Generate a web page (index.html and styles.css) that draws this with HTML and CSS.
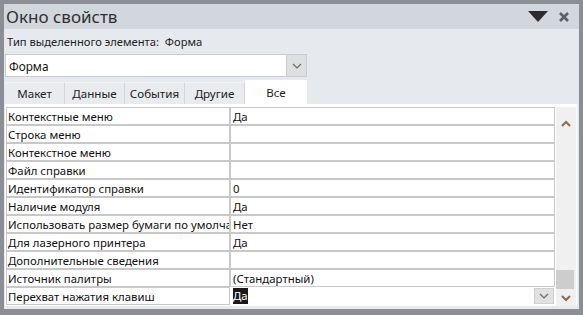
FILE: index.html
```html
<!DOCTYPE html>
<html lang="ru">
<head>
    <meta charset="UTF-8">
    <title>Окно свойств</title>
    <link rel="stylesheet" href="styles.css">
</head>
<body>
    <div class="prop-window">
        <div class="title-bar">
            <span class="title">Окно свойств</span>
            <div class="title-buttons">
                <svg class="menu-arrow" width="20" height="12" viewBox="0 0 20 12">
                    <polygon points="0,0 20,0 10,11" fill="#2f2b2c"/>
                </svg>
                <svg class="close-btn" width="12" height="12" viewBox="0 0 12 12">
                    <path d="M2 2 L10 10 M10 2 L2 10" stroke="#5b6068" stroke-width="2.6"/>
                </svg>
            </div>
        </div>

        <div class="sel-type">Тип выделенного элемента:&nbsp; Форма</div>

        <div class="combo">
            <span class="combo-text">Форма</span>
            <span class="combo-btn">
                <svg width="10" height="6" viewBox="0 0 10 6"><path d="M1 1 L5 5 L9 1" fill="none" stroke="#6a6a6a" stroke-width="1.2"/></svg>
            </span>
        </div>

        <div class="tabs">
            <div class="tab">Макет</div>
            <div class="tab">Данные</div>
            <div class="tab">События</div>
            <div class="tab">Другие</div>
            <div class="tab active">Все</div>
        </div>

        <div class="grid-panel">
            <div class="grid">
                <div class="row"><div class="cell name">Контекстные меню</div><div class="cell value">Да</div></div>
                <div class="row"><div class="cell name">Строка меню</div><div class="cell value"></div></div>
                <div class="row"><div class="cell name">Контекстное меню</div><div class="cell value"></div></div>
                <div class="row"><div class="cell name">Файл справки</div><div class="cell value"></div></div>
                <div class="row"><div class="cell name">Идентификатор справки</div><div class="cell value">0</div></div>
                <div class="row"><div class="cell name">Наличие модуля</div><div class="cell value">Да</div></div>
                <div class="row"><div class="cell name">Использовать размер бумаги по умолчанию</div><div class="cell value">Нет</div></div>
                <div class="row"><div class="cell name">Для лазерного принтера</div><div class="cell value">Да</div></div>
                <div class="row"><div class="cell name">Дополнительные сведения</div><div class="cell value"></div></div>
                <div class="row"><div class="cell name">Источник палитры</div><div class="cell value">(Стандартный)</div></div>
                <div class="row last">
                    <div class="cell name">Перехват нажатия клавиш</div>
                    <div class="cell value"><span class="selected">Да</span>
                        <span class="cell-btn">
                            <svg width="10" height="6" viewBox="0 0 10 6"><path d="M1 1 L5 5 L9 1" fill="none" stroke="#6a6a6a" stroke-width="1.2"/></svg>
                        </span>
                    </div>
                </div>
            </div>
            <div class="scrollbar">
                <svg class="sb-arrow" width="10" height="7" viewBox="0 0 10 7"><path d="M1 6 L5 2 L9 6" fill="none" stroke="#8c6a52" stroke-width="2"/></svg>
                <div class="sb-track"><div class="sb-thumb"></div></div>
                <svg class="sb-arrow" width="10" height="7" viewBox="0 0 10 7"><path d="M1 1 L5 5 L9 1" fill="none" stroke="#8c6a52" stroke-width="2"/></svg>
            </div>
        </div>
    </div>
</body>
</html>
```

FILE: styles.css
```css
* {
    margin: 0;
    padding: 0;
    box-sizing: border-box;
}

body {
    background-color: #8b8f95;
    font-family: "Noto Sans", sans-serif;
    padding: 4px 4px 0 4px;
    width: 583px;
    height: 315px;
    overflow: hidden;
}

.prop-window {
    width: 575px;
    height: 305px;
    background-color: #e6e9ed;
    display: flex;
    flex-direction: column;
}

.title-bar {
    height: 25px;
    background-color: #d2d7de;
    display: flex;
    align-items: center;
    justify-content: space-between;
    padding: 0 9px 0 2px;
}

.title {
    font-size: 17px;
    color: #303030;
}

.title-buttons {
    display: flex;
    align-items: center;
    gap: 10px;
}

.sel-type {
    font-size: 11.2px;
    color: #222;
    margin-top: 4px;
    padding-left: 3px;
    height: 17px;
    line-height: 17px;
}

.combo {
    margin-top: 4px;
    margin-left: 1px;
    width: 302px;
    height: 23px;
    background-color: #fff;
    border: 1px solid #c9cbcf;
    display: flex;
    align-items: center;
    justify-content: space-between;
}

.combo-text {
    font-size: 11.8px;
    padding-left: 3px;
    color: #111;
}

.combo-btn {
    width: 20px;
    height: 21px;
    background-color: #dedfe1;
    border-left: 1px solid #c9cbcf;
    display: flex;
    align-items: center;
    justify-content: center;
}

.tabs {
    display: flex;
    align-items: flex-end;
    margin-top: 3px;
    margin-left: 1px;
    height: 24px;
}

.tab {
    width: 60px;
    height: 22px;
    font-size: 11.6px;
    color: #222;
    background-color: #e9ebee;
    border-top: 1px solid #f3f4f6;
    border-right: 1px solid #d3d6da;
    display: flex;
    align-items: center;
    justify-content: center;
}

.tab.active {
    width: 62px;
    height: 24px;
    background-color: #fff;
    border: none;
}

.grid-panel {
    display: flex;
    margin-left: 1px;
    width: 572px;
    height: 202px;
    background-color: #fff;
    padding: 3px 0 0 1px;
}

.grid {
    width: 549px;
}

.row {
    display: flex;
    height: 18px;
}

.cell {
    border: 1px solid #c8c8c8;
    font-size: 11.4px;
    color: #111;
    line-height: 17px;
    padding-left: 1px;
    white-space: nowrap;
    overflow: hidden;
}

.cell.name {
    width: 224px;
}

.cell.value {
    width: 325px;
    padding-left: 2px;
    display: flex;
    justify-content: space-between;
}

.row.last .cell.value {
    border-color: #fff;
}

.selected {
    background-color: #1c1719;
    color: #fff;
    line-height: 16px;
}

.cell-btn {
    width: 20px;
    height: 16px;
    background-color: #e1e1e1;
    border: 1px solid #cfcfcf;
    display: flex;
    align-items: center;
    justify-content: center;
}

.scrollbar {
    width: 20px;
    margin-left: 1px;
    background-color: #f0f0f0;
    display: flex;
    flex-direction: column;
    align-items: center;
    padding: 13px 0 4px 0;
}

.sb-track {
    flex: 1;
    width: 100%;
    display: flex;
    flex-direction: column;
    justify-content: flex-end;
    padding: 0 2px 6px 0;
}

.sb-thumb {
    height: 19px;
    background-color: #cdcdcd;
}
```
